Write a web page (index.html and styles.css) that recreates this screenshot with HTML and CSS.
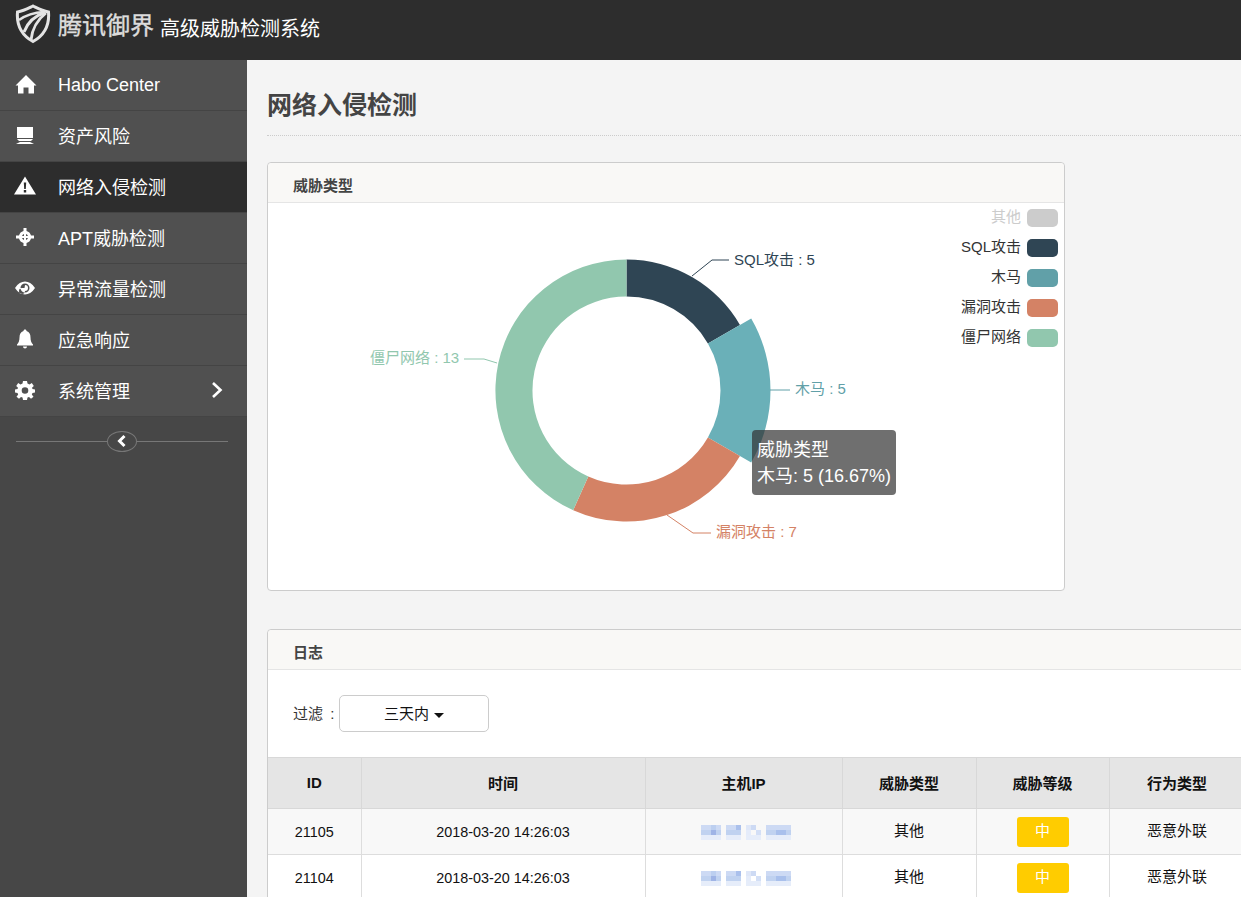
FILE: index.html
```html
<!DOCTYPE html>
<html lang="zh-CN">
<head>
  <meta charset="UTF-8">
  <meta name="viewport" content="width=device-width, initial-scale=1.0">
  <title>腾讯御界 高级威胁检测系统</title>
  <link rel="stylesheet" href="styles.css">
</head>
<body>
  <div class="topbar">
    <svg class="logo" viewBox="0 0 36 40" fill="none" stroke="#e4e4e4">
      <path d="M2.500 8 C9 7 13 4.500 18 2 C23 4.500 27 7 33.500 8 C34.500 20 30.500 30.500 18 37.500 C5.500 30.500 1.500 20 2.500 8 Z" stroke-width="3"/>
      <path d="M4 16 C11 11 19 8.500 29 8" stroke-width="2.600"/>
      <path d="M9 28 C12 20 19 12 30 8.500" stroke-width="3"/>
      <path d="M16 36 C17 26 22 16 31 9" stroke-width="2.800"/>
    </svg>
    <span class="brand">腾讯御界</span>
    <span class="product">高级威胁检测系统</span>
  </div>

  <div class="layout">
    <div class="sidebar">
      <ul class="nav">
        <li class="nav-item">
          <svg class="nav-icon" viewBox="0 0 24 24"><path d="M13 3 L23.500 13.500 L21 13.500 L21 21.500 L15.500 21.500 L15.500 15.500 L10.500 15.500 L10.500 21.500 L5 21.500 L5 13.500 L2.500 13.500 Z"/></svg>
          Habo Center
        </li>
        <li class="nav-item">
          <svg class="nav-icon" viewBox="0 0 24 24"><path d="M4 4 H20 V15 H4 Z M4 16 H20 L18 18 H6 Z M7 19 H17 L21 21 H3 Z"/></svg>
          资产风险
        </li>
        <li class="nav-item active">
          <svg class="nav-icon" viewBox="0 0 24 24"><path fill-rule="evenodd" d="M12 2.500 L23 20.500 H1 Z M10.800 8.500 L11.200 15 H12.800 L13.200 8.500 Z M10.800 16 V18.500 H13.200 V16 Z"/></svg>
          网络入侵检测
        </li>
        <li class="nav-item">
          <svg class="nav-icon" viewBox="0 0 24 24"><path fill-rule="evenodd" d="M10.500 3 H13.500 V6 A6.500 6.500 0 0 1 18 10.500 H21 V13.500 H18 A6.500 6.500 0 0 1 13.500 18 V21 H10.500 V18 A6.500 6.500 0 0 1 6 13.500 H3 V10.500 H6 A6.500 6.500 0 0 1 10.500 6 Z M11 9 A3.500 3.500 0 0 0 9 11 H11 Z M13 9 V11 H15 A3.500 3.500 0 0 0 13 9 Z M9 13 A3.500 3.500 0 0 0 11 15 V13 Z M13 13 V15 A3.500 3.500 0 0 0 15 13 Z"/></svg>
          APT威胁检测
        </li>
        <li class="nav-item">
          <svg class="nav-icon" viewBox="0 0 24 24"><path fill-rule="evenodd" d="M2 12 C5 7.500 8.500 5.500 12 5.500 C15.500 5.500 19 7.500 22 12 C19 16.500 15.500 18.500 12 18.500 C8.500 18.500 5 16.500 2 12 Z M12 7.500 A4.500 4.500 0 1 0 12 16.500 A4.500 4.500 0 1 0 12 7.500 Z M12 9 A3 3 0 1 1 12 15 A3 3 0 1 1 9 12 L11.500 12 Z"/></svg>
          异常流量检测
        </li>
        <li class="nav-item">
          <svg class="nav-icon" viewBox="0 0 24 24"><path d="M12 2.500 C13 2.500 13.500 3.200 13.500 4 C16.500 5 17.500 7.500 17.500 10.500 C17.500 14 18.500 16 20 17.500 V18.500 H4 V17.500 C5.500 16 6.500 14 6.500 10.500 C6.500 7.500 7.500 5 10.500 4 C10.500 3.200 11 2.500 12 2.500 Z M10 19.500 H14 C14 20.800 13 21.500 12 21.500 C11 21.500 10 20.800 10 19.500 Z"/></svg>
          应急响应
        </li>
        <li class="nav-item">
          <svg class="nav-icon" viewBox="0 0 24 24"><path fill-rule="evenodd" d="M10 3 H14 L14.500 5.600 L16.500 6.500 L18.800 5 L20.800 8 L19 9.800 L19.500 11 L22 11.500 V14.500 L19.500 15 L18.800 16.500 L20.500 18.800 L18 20.800 L16 19 L14.500 19.600 L14 22 H10 L9.500 19.600 L8 19 L6 20.800 L3.500 18.800 L5.200 16.500 L4.500 15 L2 14.500 V11.500 L4.500 11 L5 9.800 L3.200 8 L5.200 5 L7.500 6.500 L9.500 5.600 Z M12 9.200 A3.300 3.300 0 1 0 12 15.800 A3.300 3.300 0 1 0 12 9.200 Z"/></svg>
          系统管理
          <svg class="nav-arrow" viewBox="0 0 12 18"><path d="M2 2 L9.500 9 L2 16" fill="none" stroke="#fff" stroke-width="2.600"/></svg>
        </li>
      </ul>
      <div class="collapse-row">
        <span class="collapse-btn">
          <svg viewBox="0 0 12 14"><path d="M8.500 2 L3.500 7 L8.500 12" fill="none" stroke="#fff" stroke-width="3"/></svg>
        </span>
      </div>
    </div>

    <div class="main-content">
      <h1 class="page-title">网络入侵检测</h1>

      <div class="panel panel-chart">
        <div class="panel-header">威胁类型</div>
        <div class="chart">
          <svg class="chart-svg" viewBox="268 203 796 387">
            <path fill="#2f4554" d="M626.500 259.500 A131 131 0 0 1 739.950 325 L707.900 343.500 A94 94 0 0 0 626.500 296.500 Z"/>
            <path fill="#6ab0b8" d="M751.200 318.500 A144 144 0 0 1 751.200 462.500 L707.900 437.500 A94 94 0 0 0 707.900 343.500 Z"/>
            <path fill="#d48265" d="M739.950 456 A131 131 0 0 1 573.200 510.200 L588.300 476.400 A94 94 0 0 0 707.900 437.500 Z"/>
            <path fill="#91c7ae" d="M573.200 510.200 A131 131 0 0 1 626.500 259.500 L626.500 296.500 A94 94 0 0 0 588.300 476.400 Z"/>

            <polyline class="leader" stroke="#2f4554" points="692,276 712,260 729,260"/>
            <polyline class="leader" stroke="#61a0a8" points="770,390 790,390"/>
            <polyline class="leader" stroke="#d48265" points="667,515 693,533 711,533"/>
            <polyline class="leader" stroke="#91c7ae" points="497,363 484,359 464,359"/>

            <text class="label" x="734" y="265" fill="#2f4554">SQL攻击 : 5</text>
            <text class="label" x="795" y="394" fill="#61a0a8">木马 : 5</text>
            <text class="label" x="716" y="537" fill="#d48265">漏洞攻击 : 7</text>
            <text class="label" x="370" y="363" fill="#91c7ae">僵尸网络 : 13</text>

            <text class="legend-text" x="1021" y="222" fill="#ccc">其他</text>
            <rect x="1027" y="209" width="31" height="18" rx="5" fill="#ccc"/>
            <text class="legend-text" x="1021" y="252" fill="#333">SQL攻击</text>
            <rect x="1027" y="239" width="31" height="18" rx="5" fill="#2f4554"/>
            <text class="legend-text" x="1021" y="282" fill="#333">木马</text>
            <rect x="1027" y="269" width="31" height="18" rx="5" fill="#61a0a8"/>
            <text class="legend-text" x="1021" y="312" fill="#333">漏洞攻击</text>
            <rect x="1027" y="299" width="31" height="18" rx="5" fill="#d48265"/>
            <text class="legend-text" x="1021" y="342" fill="#333">僵尸网络</text>
            <rect x="1027" y="329" width="31" height="18" rx="5" fill="#91c7ae"/>
          </svg>
          <div class="tooltip">威胁类型<br>木马: 5 (16.67%)</div>
        </div>
      </div>

      <div class="panel panel-log">
        <div class="panel-header">日志</div>
        <div class="filter-row">
          <span class="filter-label">过滤 :</span>
          <button class="filter-btn">三天内 <span class="caret"></span></button>
        </div>
        <table class="log-table">
          <colgroup>
            <col class="col-id">
            <col class="col-time">
            <col class="col-ip">
            <col class="col-type">
            <col class="col-level">
            <col class="col-action">
          </colgroup>
          <thead>
            <tr>
              <th>ID</th>
              <th>时间</th>
              <th>主机IP</th>
              <th>威胁类型</th>
              <th>威胁等级</th>
              <th>行为类型</th>
            </tr>
          </thead>
          <tbody>
            <tr>
              <td>21105</td>
              <td>2018-03-20 14:26:03</td>
              <td><svg class="ip-blur"><use href="#ipBlocks"/></svg></td>
              <td class="cn">其他</td>
              <td><span class="level">中</span></td>
              <td class="cn">恶意外联</td>
            </tr>
            <tr>
              <td>21104</td>
              <td>2018-03-20 14:26:03</td>
              <td><svg class="ip-blur"><use href="#ipBlocks"/></svg></td>
              <td class="cn">其他</td>
              <td><span class="level">中</span></td>
              <td class="cn">恶意外联</td>
            </tr>
          </tbody>
        </table>
      </div>
    </div>
  </div>

  <!-- pixelated ip address -->
  <svg class="defs" width="0" height="0">
    <symbol id="ipBlocks" viewBox="0 0 90 15">
      <g fill="#cddaf4">
        <rect x="0" y="0" width="20" height="5"/>
        <rect x="25" y="0" width="10" height="5"/>
        <rect x="50" y="0" width="5" height="5"/>
        <rect x="65" y="0" width="25" height="5"/>
      </g>
      <rect x="10" y="0" width="5" height="5" fill="#bccff0"/>
      <rect x="35" y="0" width="5" height="5" fill="#aac0ec"/>
      <rect x="45" y="0" width="5" height="5" fill="#dfe7f8"/>
      <g fill="#c0d2f0">
        <rect x="0" y="5" width="20" height="5"/>
        <rect x="25" y="5" width="15" height="5"/>
        <rect x="65" y="5" width="25" height="5"/>
      </g>
      <rect x="10" y="5" width="5" height="5" fill="#9fb4e6"/>
      <rect x="45" y="5" width="5" height="5" fill="#e5ecfa"/>
      <rect x="55" y="5" width="5" height="5" fill="#d3dff6"/>
      <rect x="75" y="5" width="10" height="5" fill="#a9c0ec"/>
      <g fill="#e6edfa">
        <rect x="0" y="10" width="20" height="5"/>
        <rect x="25" y="10" width="15" height="5"/>
        <rect x="45" y="10" width="15" height="5"/>
        <rect x="65" y="10" width="25" height="5"/>
      </g>
    </symbol>
  </svg>
</body>
</html>
```

FILE: styles.css
```css
body {
  font-family: "Liberation Sans", "Noto Sans CJK SC", sans-serif;
  margin: 0;
  padding: 0;
  height: 100vh;
  overflow: hidden;
  display: flex;
  flex-direction: column;
  color: #333;
  background-color: #f4f4f4;
}

.topbar {
  height: 60px;
  flex-shrink: 0;
  background-color: #2d2d2d;
  display: flex;
  align-items: center;
  padding-left: 15px;
  color: #fff;
  box-sizing: border-box;
}

.logo {
  width: 36px;
  height: 40px;
  margin-top: -12px;
}

.brand {
  font-size: 24px;
  color: #dcdcdc;
  -webkit-text-stroke: 0.4px #dcdcdc;
  margin-left: 7px;
  margin-top: -14px;
}

.product {
  font-size: 20px;
  margin-left: 6px;
  margin-top: -5px;
}

.layout {
  flex: 1;
  display: flex;
  min-height: 0;
}

.sidebar {
  width: 247px;
  flex-shrink: 0;
  background-color: #474747;
}

.nav {
  list-style-type: none;
  margin: 0;
  padding: 0;
}

.nav-item {
  height: 47px;
  display: flex;
  align-items: center;
  padding: 0 24px 3px 13px;
  font-size: 18px;
  color: #fff;
  background-color: #505050;
  border-bottom: 1px solid #444;
}

.nav-item:first-child {
  height: 50px;
  padding-bottom: 0;
}

.nav-item.active {
  background-color: #2d2d2d;
}

.nav-icon {
  width: 24px;
  height: 24px;
  margin-right: 21px;
  fill: #fff;
  flex-shrink: 0;
}

.nav-item:first-child .nav-icon {
  margin-top: -2px;
}

.nav-arrow {
  width: 12px;
  height: 18px;
  margin-left: auto;
}

.collapse-row {
  margin: 13px 19px 0 16px;
  height: 22px;
  display: flex;
  align-items: center;
  justify-content: center;
  background: linear-gradient(#777, #777) center / 100% 1px no-repeat;
}

.collapse-btn {
  width: 28px;
  height: 19px;
  border: 1px solid #777;
  border-radius: 50%;
  background-color: #474747;
  display: flex;
  align-items: center;
  justify-content: center;
}

.collapse-btn svg {
  width: 12px;
  height: 14px;
}

.main-content {
  flex: 1;
  min-width: 0;
  overflow: hidden;
  padding-left: 20px;
}

.page-title {
  font-size: 25px;
  line-height: 30px;
  font-weight: bold;
  color: #444;
  margin: 0 0 26px;
  padding: 30px 0 15px;
  border-bottom: 1px dotted #ccc;
}

.panel {
  background-color: white;
  border: 1px solid #ccc;
  border-radius: 4px;
  box-sizing: border-box;
}

.panel-chart {
  width: 798px;
  margin-bottom: 38px;
}

.panel-log {
  width: 1000px;
}

.panel-header {
  height: 39px;
  line-height: 45px;
  padding-left: 25px;
  font-size: 15px;
  font-weight: bold;
  color: #444;
  background-color: #f9f8f6;
  border-bottom: 1px solid #e5e5e5;
  border-radius: 4px 4px 0 0;
}

.chart {
  position: relative;
  height: 387px;
}

.chart-svg {
  display: block;
  width: 796px;
  height: 387px;
}

.leader {
  fill: none;
  stroke-width: 1;
}

.label {
  font-size: 15px;
}

.legend-text {
  font-size: 15px;
  text-anchor: end;
}

.tooltip {
  position: absolute;
  left: 484px;
  top: 227px;
  width: 144px;
  height: 65px;
  box-sizing: border-box;
  padding: 7px 0 0 5px;
  font-size: 18px;
  line-height: 26px;
  color: #fff;
  white-space: nowrap;
  background-color: rgba(50, 50, 50, 0.7);
  border-radius: 4px;
}

.filter-row {
  display: flex;
  align-items: center;
  padding: 25px 25px;
  font-size: 15px;
}

.filter-label {
  color: #333;
  width: 46px;
  flex-shrink: 0;
  margin-top: -2px;
  word-spacing: 3px;
}

.filter-btn {
  width: 150px;
  height: 37px;
  padding-bottom: 3px;
  background-color: white;
  border: 1px solid #ccc;
  border-radius: 5px;
  font-family: inherit;
  font-size: 15px;
  color: #111;
}

.caret {
  display: inline-block;
  width: 0;
  height: 0;
  margin-left: 1px;
  vertical-align: middle;
  border-top: 5px solid #111;
  border-left: 5px solid transparent;
  border-right: 5px solid transparent;
}

.log-table {
  width: 977px;
  table-layout: fixed;
  border-collapse: collapse;
  font-size: 14.4px;
  color: #111;
  text-align: center;
}

.col-id { width: 93px; }
.col-time { width: 284px; }
.col-ip { width: 197px; }
.col-type { width: 134px; }
.col-level { width: 133px; }
.col-action { width: 136px; }

.log-table th {
  height: 51px;
  padding: 0 0 2px;
  box-sizing: border-box;
  font-size: 15px;
  background-color: #e5e5e5;
  border: 1px solid #d8d8d8;
  border-left-color: #dcdcdc;
}

.log-table td {
  height: 45px;
  padding: 0;
  border: 1px solid #ddd;
}

.log-table td.cn {
  font-size: 15px;
  padding-bottom: 4px;
  box-sizing: border-box;
}

.log-table th:first-child,
.log-table td:first-child {
  border-left: none;
}

.log-table tbody tr:nth-child(odd) {
  background-color: #f8f8f8;
}

.ip-blur {
  display: block;
  width: 90px;
  height: 15px;
  margin: 0 auto;
  position: relative;
  left: 2px;
  top: 1px;
  filter: blur(0.6px);
}

.level {
  display: inline-block;
  width: 52px;
  height: 30px;
  line-height: 28px;
  vertical-align: middle;
  border-radius: 3px;
  font-size: 15px;
  color: #fff;
  background-color: #ffcc00;
}

.defs {
  position: absolute;
}
```
